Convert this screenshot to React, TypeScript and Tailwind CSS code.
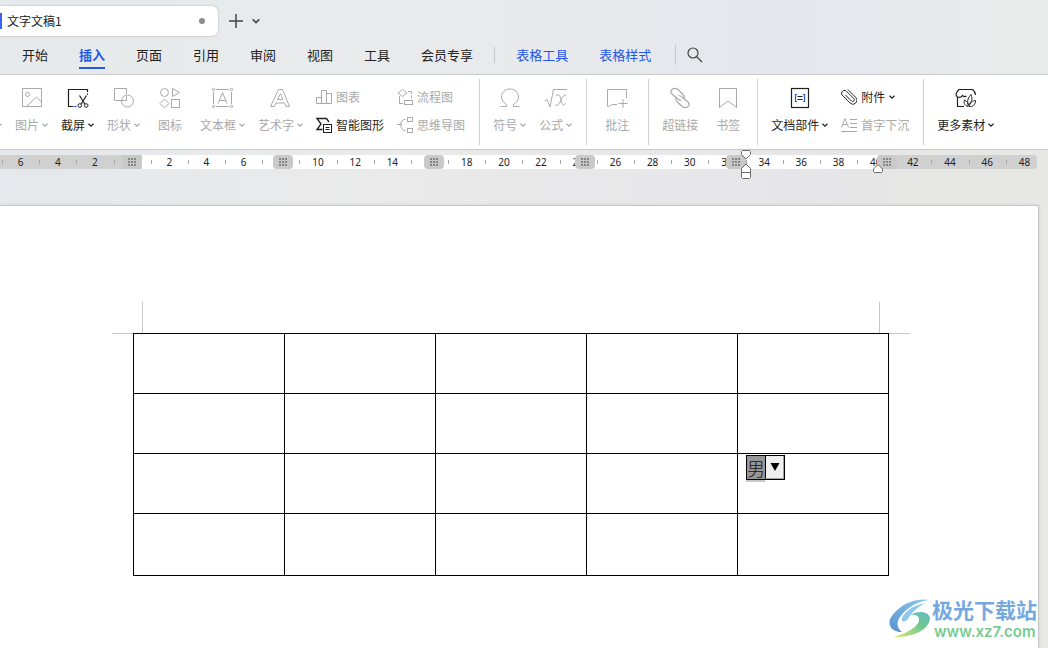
import type { ReactNode } from "react";

const menuItems = ["开始", "插入", "页面", "引用", "审阅", "视图", "工具", "会员专享"];
const tableMenuItems = ["表格工具", "表格样式"];
const rulerLabels = [
	6, 4, 2, 0, 2, 4, 6, 8, 10, 12, 14, 16, 18, 20, 22, 24, 26, 28, 30, 32, 34, 36,
	38, 40, 42, 44, 46, 48,
];
const rowHeights = ["h-[60px]", "h-[60px]", "h-[60px]", "h-[62px]"];
const columns = [0, 1, 2, 3, 4];

function Chevron({ size = 6 }: { size?: number }) {
	return (
		<svg width={size} height={size} viewBox="0 0 6 6" fill="none" stroke="currentColor" strokeWidth="1.2">
			<path d="M0.5 1.8L3 4.2L5.5 1.8" />
		</svg>
	);
}

function Icon({ children, size = 24 }: { children: ReactNode; size?: number }) {
	return (
		<svg
			width={size}
			height={size}
			viewBox={`0 0 ${size} ${size}`}
			fill="none"
			stroke="currentColor"
			strokeWidth="1"
			className="shrink-0"
			aria-hidden="true"
		>
			{children}
		</svg>
	);
}

interface ToolProps {
	label: string;
	icon: ReactNode;
	active?: boolean;
	arrow?: boolean;
	narrow?: boolean;
}

function Tool({ label, icon, active, arrow, narrow }: ToolProps) {
	return (
		<button
			type="button"
			className={`flex shrink-0 flex-col items-center gap-[5px] ${active ? "text-[#1f1f1f]" : "text-[#a9a9a9]"} ${narrow ? "px-[5px]" : ""}`}
		>
			<Icon>{icon}</Icon>
			<span className="flex items-center gap-[3px] text-xs leading-5 whitespace-nowrap">
				{label}
				{arrow && <Chevron />}
			</span>
		</button>
	);
}

function SmallTool({ label, icon, active, arrow }: ToolProps) {
	return (
		<button
			type="button"
			className={`flex items-center gap-1 text-xs leading-5 whitespace-nowrap ${active ? "text-[#1f1f1f]" : "text-[#a9a9a9]"}`}
		>
			<Icon size={16}>{icon}</Icon>
			{label}
			{arrow && <Chevron />}
		</button>
	);
}

function Stack({ children }: { children: ReactNode }) {
	return <div className="flex shrink-0 flex-col items-start gap-2">{children}</div>;
}

function Group({ children, first, tight }: { children: ReactNode; first?: boolean; tight?: boolean }) {
	return (
		<div
			className={`flex shrink-0 items-end gap-[13px] pb-[14px] ${first ? "-ml-1" : "pl-[13px]"} ${tight ? "pr-3" : "pr-[14px]"}`}
		>
			{children}
		</div>
	);
}

function Divider() {
	return <div className="my-1 w-px shrink-0 bg-[#d2d2d2]" />;
}

function Ribbon() {
	return (
		<div className="flex h-[76px] overflow-hidden border-y border-[#c8c9cb] bg-white">
			<Group first>
				<button type="button" aria-label="表格" className="flex h-5 items-center text-[#a9a9a9]">
					<Chevron />
				</button>
				<Tool
					label="图片"
					arrow
					icon={
						<>
							<rect x="2.5" y="2.5" width="19" height="18" />
							<circle cx="7.5" cy="8.5" r="2" />
							<path d="M6.5 20.5L16.5 11L21.5 16" />
						</>
					}
				/>
				<Tool
					label="截屏"
					active
					arrow
					icon={
						<>
							<path d="M7.5 20.5H2.5V3.5H21.5V6" strokeWidth="1.2" />
							<path d="M21.5 7v2M8 20.5h2.5" stroke="#2b5be8" />
							<path d="M13.5 9.5L18.8 18M20.5 9.5L15.2 18" strokeWidth="1.2" />
							<circle cx="13.8" cy="19.5" r="1.8" />
							<circle cx="20.2" cy="19.5" r="1.8" />
						</>
					}
				/>
				<Tool
					label="形状"
					arrow
					icon={
						<>
							<path d="M9 14.5H2.5V2.5H14.5V8" />
							<circle cx="15.5" cy="15" r="6" />
							<path d="M14.5 9.5V14.5H10" />
						</>
					}
				/>
				<Tool
					label="图标"
					narrow
					icon={
						<>
							<circle cx="6.5" cy="6.5" r="4" />
							<path d="M14.5 2.5V10.5L21.5 6.5Z" />
							<path d="M6.5 13L11 17.5L6.5 22L2 17.5Z" />
							<rect x="13.5" y="13.5" width="8" height="8" />
						</>
					}
				/>
				<Tool
					label="文本框"
					arrow
					icon={
						<>
							<path d="M5 3.5H18M5 20.5H18M2.5 6V18M20.5 6V18" />
							<circle cx="2.5" cy="3.5" r="1.2" />
							<circle cx="20.5" cy="3.5" r="1.2" />
							<circle cx="2.5" cy="20.5" r="1.2" />
							<circle cx="20.5" cy="20.5" r="1.2" />
							<path d="M7 17.5L11.5 6.5L16 17.5M8.5 14.5H14.5" />
						</>
					}
				/>
				<Tool
					label="艺术字"
					arrow
					icon={
						<>
							<path d="M1.5 20.5L9.5 3.5H13.5L20.5 20.5H17L15.5 17H7L5.5 20.5Z" />
							<path d="M8.5 13.5L11.5 7.5L14 13.5Z" />
						</>
					}
				/>
				<Stack>
					<SmallTool
						label="图表"
						icon={<path d="M0.5 14.5V8.5H5.5V14.5M5.5 14.5V1.5H10.5V14.5M10.5 4.5H15.5V14.5H0.5" />}
					/>
					<SmallTool
						label="智能图形"
						active
						icon={
							<>
								<path d="M6.5 12.5H1L5 7L1 1.5H10.5L13 5" strokeWidth="1.3" />
								<rect x="7.5" y="7.5" width="8" height="8" />
								<path d="M9.5 10.5H13.5M9.5 12.5H13.5" />
							</>
						}
					/>
				</Stack>
				<Stack>
					<SmallTool
						label="流程图"
						icon={
							<>
								<path d="M5.5 0.5L10 4L5.5 7.5L1 4Z" />
								<path d="M2.5 7V14.5H6M11 2.5H14.5V5M14.5 6.5V9" />
								<rect x="7.5" y="11.5" width="8" height="4" />
							</>
						}
					/>
					<SmallTool
						label="思维导图"
						icon={
							<>
								<path d="M0 7.5H5M8.5 2.5H6.5L4 5V10.5L6.5 13.5H8.5" />
								<rect x="10.5" y="0.5" width="5" height="4" />
								<rect x="10.5" y="11.5" width="5" height="4" />
							</>
						}
					/>
				</Stack>
			</Group>
			<Divider />
			<Group>
				<Tool
					label="符号"
					arrow
					icon={<path d="M2.5 20.5H8.5V18.5C5 16.5 3.5 13.5 3.5 11C3.5 6.5 7 3 12 3S20.5 6.5 20.5 11C20.5 13.5 19 16.5 15.5 18.5V20.5H21.5" />}
				/>
				<Tool
					label="公式"
					arrow
					icon={
						<>
							<path d="M0.5 15L3 13.5L6 21L9.5 3.5H23" />
							<path d="M12 9.5C15 7.5 16 9.5 17 14C18 19.5 19.5 20 21.5 17.5M22 9.5C19.5 8 18 12 16.5 15C15 18.5 13 20.5 11 18.5" />
						</>
					}
				/>
			</Group>
			<Divider />
			<Group>
				<Tool
					label="批注"
					narrow
					icon={<path d="M12 18.5H7.5L3.5 20.5H2.5V3.5H21.5V12M13.5 17.5H22.5M18 13V22" />}
				/>
			</Group>
			<Divider />
			<Group tight>
				<Tool
					label="超链接"
					icon={
						<>
							<path
								d="M13.5 14.5C12 14.5 11 14 10 13L4.5 8.5C2.5 6.5 2.2 5 4 3.5S8 2 10 3.5L14.5 8C16.5 10 16.5 12 15.5 13"
								strokeWidth="1.2"
							/>
							<path
								d="M10.5 9.5C12 9.5 13 10 14 11L19.5 15.5C21.5 17.5 21.8 19 20 20.5S16 22 14 20.5L9.5 16C7.5 14 7.5 12 8.5 11"
								strokeWidth="1.2"
							/>
						</>
					}
				/>
				<Tool label="书签" narrow icon={<path d="M3.5 2.5H20.5V21.5L12 15L3.5 21.5Z" />} />
			</Group>
			<Divider />
			<Group>
				<Tool
					label="文档部件"
					active
					arrow
					icon={
						<>
							<rect x="3.5" y="2.5" width="17" height="19" strokeWidth="1.2" />
							<path d="M9 8.5H7.5V15.5H9M15 8.5H16.5V15.5H15" stroke="#2b5be8" strokeWidth="1.2" />
							<path d="M9.5 10.5H14.5M9.5 13.5H14.5" />
						</>
					}
				/>
				<Stack>
					<SmallTool
						label="附件"
						active
						arrow
						icon={
							<path
								transform="rotate(-45 8 8)"
								d="M12.5 2V13A4 4 0 0 1 4.5 13V1.5A3 3 0 0 1 10.3 1.5V12.5A1.7 1.7 0 0 1 6.9 12.5V4"
								strokeWidth="0.9"
							/>
						}
					/>
					<SmallTool
						label="首字下沉"
						icon={<path d="M0.5 10.5L4 1.5L7.5 10.5M2 7.5H6M9 2.5H16M9 6.5H16M9 10.5H16M0 14.5H16" />}
					/>
				</Stack>
			</Group>
			<Divider />
			<Group>
				<Tool
					label="更多素材"
					active
					arrow
					icon={
						<>
							<path
								d="M10 20.5H3.5V11M3.5 11C1 9 2 6.5 5 3.5H18.5C21 5.5 21.5 6.5 21.5 9M3.5 11C6 12 7.5 11 8.5 9.5C10 11 11 11 12.5 10"
								strokeWidth="1.2"
							/>
							<path d="M14 20.5C9.5 19 10 16.5 10.5 14C13.5 15.5 14.5 17 14 20.5ZM14.5 19C12.5 14.5 14.5 11.5 17 8.5C19 13 17.5 16.5 14.5 19ZM15 20.5C16 17 18.5 14.5 21.5 14.5C21.5 18.5 19 21 15 20.5Z" />
						</>
					}
				/>
			</Group>
		</div>
	);
}

function ColumnHandle({ className }: { className: string }) {
	return (
		<div className={`absolute top-0 flex h-[14px] w-5 items-center justify-center rounded-[4px] bg-[#c9c9c9] ${className}`}>
			<svg width="8" height="8" viewBox="0 0 8 8" fill="#858585">
				{[0, 3, 6].map((y) => [0, 3, 6].map((x) => <rect key={`${x}-${y}`} x={x} y={y} width="2" height="2" />))}
			</svg>
		</div>
	);
}

function Ruler() {
	return (
		<div className="relative mt-[5px] h-[14px]">
			<div className="mr-[11px] flex h-full overflow-hidden rounded-r-[4px] bg-[#d0d0d0]">
				<div className="ml-[142px] w-[736px] bg-white" />
			</div>
			<div className="absolute inset-0 mr-[5px] ml-[2px] grid grid-cols-[repeat(28,minmax(0,1fr))] font-['Noto_Sans',sans-serif] text-[10px] leading-[14px] text-[#222]">
				{rulerLabels.map((n, i) => (
					<div key={i} className="relative text-center">
						<span className="absolute top-[5px] left-0 h-1 w-px bg-[#a8a8a8]" />
						{n}
					</div>
				))}
			</div>
			<ColumnHandle className="left-[122px]" />
			<ColumnHandle className="left-[273px]" />
			<ColumnHandle className="left-[424px]" />
			<ColumnHandle className="left-[575px]" />
			<ColumnHandle className="left-[726px]" />
			<ColumnHandle className="left-[877px]" />
			<svg className="absolute -top-[5px] left-[741px]" width="10" height="29" viewBox="0 0 10 29" fill="#fff" stroke="#6b6b6b">
				<path d="M1.5 0.5H8.5L9.5 1.5V4.5L5 9L0.5 4.5V1.5Z" />
				<path d="M5 14L9.5 18.5V22.5H0.5V18.5Z" />
				<path d="M0.5 22.5H9.5V27.5L8.5 28.5H1.5L0.5 27.5Z" />
			</svg>
			<svg className="absolute top-[9px] left-[873px]" width="10" height="9" viewBox="0 0 10 9" fill="#fff" stroke="#6b6b6b">
				<path d="M5 0.5L9.5 5V7.5L8.5 8.5H1.5L0.5 7.5V5Z" />
			</svg>
		</div>
	);
}

function GenderField() {
	return (
		<div className="relative mt-px ml-2 h-[26px] w-[39px]">
			<select
				aria-label="性别"
				className="block h-[25px] w-[39px] appearance-none border border-black bg-[linear-gradient(to_right,#969696_18px,#efefef_18px)] font-['Noto_Sans_CJK_SC',sans-serif] text-[18px] leading-[22px] font-light text-[#1c1016] outline-none"
				defaultValue="男"
			>
				<option>男</option>
				<option>女</option>
			</select>
			<span className="pointer-events-none absolute top-px right-px flex h-[23px] w-[19px] items-center justify-center border-r border-b border-l border-r-[#a0a0a0] border-b-[#a0a0a0] border-l-black">
				<svg width="10" height="8" viewBox="0 0 10 8">
					<path d="M0.5 0H9.5L5 8Z" />
				</svg>
			</span>
			<span className="absolute -bottom-px left-0 h-[2px] w-[19px] bg-[#c8c8c8]" />
		</div>
	);
}

function Watermark() {
	return (
		<div className="absolute right-[11px] bottom-[7px] flex items-center">
			<svg width="43" height="42" viewBox="0 0 43 42">
				<defs>
					<linearGradient id="sky" x1="0" y1="1" x2="1" y2="0">
						<stop offset="0" stopColor="#5b93d0" />
						<stop offset="1" stopColor="#8cc8ee" />
					</linearGradient>
					<linearGradient id="leaf" x1="0" y1="1" x2="1" y2="0">
						<stop offset="0" stopColor="#dcea78" />
						<stop offset="0.6" stopColor="#6ec98d" />
						<stop offset="1" stopColor="#65b9c4" />
					</linearGradient>
				</defs>
				<path d="M40 2C25-1 8 8 1 21C-1 28 3 34 13 34C8 30 7 25 11 19C17 10 29 3 40 2Z" fill="url(#sky)" />
				<path d="M36 5C25 7 16 13 13 20C12 24 15 25 19 21C22 15 29 9 36 5Z" fill="#8fc6ec" />
				<path d="M21 17C29 12 41 13 41 21C39 33 22 40 4 39C16 36 28 30 30 23C31 18 27 16 21 17Z" fill="url(#leaf)" />
			</svg>
			<div className="flex flex-col">
				<span className="font-['Noto_Sans_CJK_SC',sans-serif] text-[21px] leading-[27px] font-bold text-[#75a9de]">
					极光下载站
				</span>
				<span className="pl-[2px] font-['Inter',sans-serif] text-[15px] leading-[18px] font-semibold text-[#76cb91]">
					www.xz7.com
				</span>
			</div>
		</div>
	);
}

export default function App() {
	return (
		<div className="relative flex min-h-screen flex-col overflow-hidden bg-[linear-gradient(to_right,#e5e8ec,#eaeaea_35%,#e6e5e8_75%,#e7e8e3)] font-['Noto_Sans_CJK_SC',sans-serif] text-[#222]">
			<header className="bg-[linear-gradient(to_right,#e6eaec,#e9eaeb_40%,#e4e7ed_75%,#e9ebea)]">
				<div className="flex items-center pt-[6px]">
					<div className="flex h-[30px] w-[218px] items-center rounded-r-md bg-white text-xs shadow-[0_0_2px_rgba(0,0,0,0.3)]">
						<span className="mr-[5px] h-4 w-[2px] bg-[#3763f5]" />
						文字文稿1
						<span className="mr-[13px] ml-auto size-[6px] rounded-full bg-[#8c8c8c]" />
					</div>
					<button type="button" aria-label="新建" className="ml-[10px] text-[#444]">
						<svg width="16" height="16" viewBox="0 0 16 16" stroke="currentColor" strokeWidth="1.5">
							<path d="M1 8H15M8 1V15" />
						</svg>
					</button>
					<button type="button" aria-label="更多" className="ml-2 text-[#444]">
						<Chevron size={8} />
					</button>
				</div>
				<nav className="flex h-[38px] items-center gap-[31px] pl-[22px] text-[13px] leading-[26px] whitespace-nowrap">
					{menuItems.map((item) => (
						<button
							key={item}
							type="button"
							className={
								item === "插入"
									? "border-y-2 border-t-transparent border-b-[#2456e6] leading-[24px] font-bold text-[#2456e6]"
									: ""
							}
						>
							{item}
						</button>
					))}
					<span className="-mx-[10px] h-4 w-px bg-[#c6c7ca]" />
					{tableMenuItems.map((item) => (
						<button key={item} type="button" className="text-[#2456e6]">
							{item}
						</button>
					))}
					<div className="-ml-[7px] flex items-center gap-[11px]">
						<span className="h-5 w-px bg-[#c6c7ca]" />
						<button type="button" aria-label="搜索">
							<svg width="16" height="16" viewBox="0 0 16 16" fill="none" stroke="#444" strokeWidth="1.2">
								<circle cx="6" cy="6" r="5" />
								<path d="M9.5 9.5L15 15" />
							</svg>
						</button>
					</div>
				</nav>
			</header>
			<Ribbon />
			<Ruler />
			<main className="mt-9 mr-[9px] flex-1 border-t border-r border-[#c6c6c6] bg-white pt-[96px] shadow-[0_0_3px_rgba(0,0,0,0.1)]">
				<div className="ml-[112px] w-[798px]">
					<div className="flex justify-between px-[30px]">
						<span className="h-[31px] w-px bg-[#c8c8c8]" />
						<span className="h-[31px] w-px bg-[#c8c8c8]" />
					</div>
					<div className="flex items-start">
						<span className="h-px flex-1 bg-[#c8c8c8]" />
						<table className="w-[756px] table-fixed border-collapse border border-black">
							<tbody>
								{rowHeights.map((height, row) => (
									<tr key={row} className={height}>
										{columns.map((col) => (
											<td key={col} className="border border-black p-0 align-top">
												{row === 2 && col === 4 && <GenderField />}
											</td>
										))}
									</tr>
								))}
							</tbody>
						</table>
						<span className="h-px flex-1 bg-[#c8c8c8]" />
					</div>
				</div>
			</main>
			<Watermark />
		</div>
	);
}
